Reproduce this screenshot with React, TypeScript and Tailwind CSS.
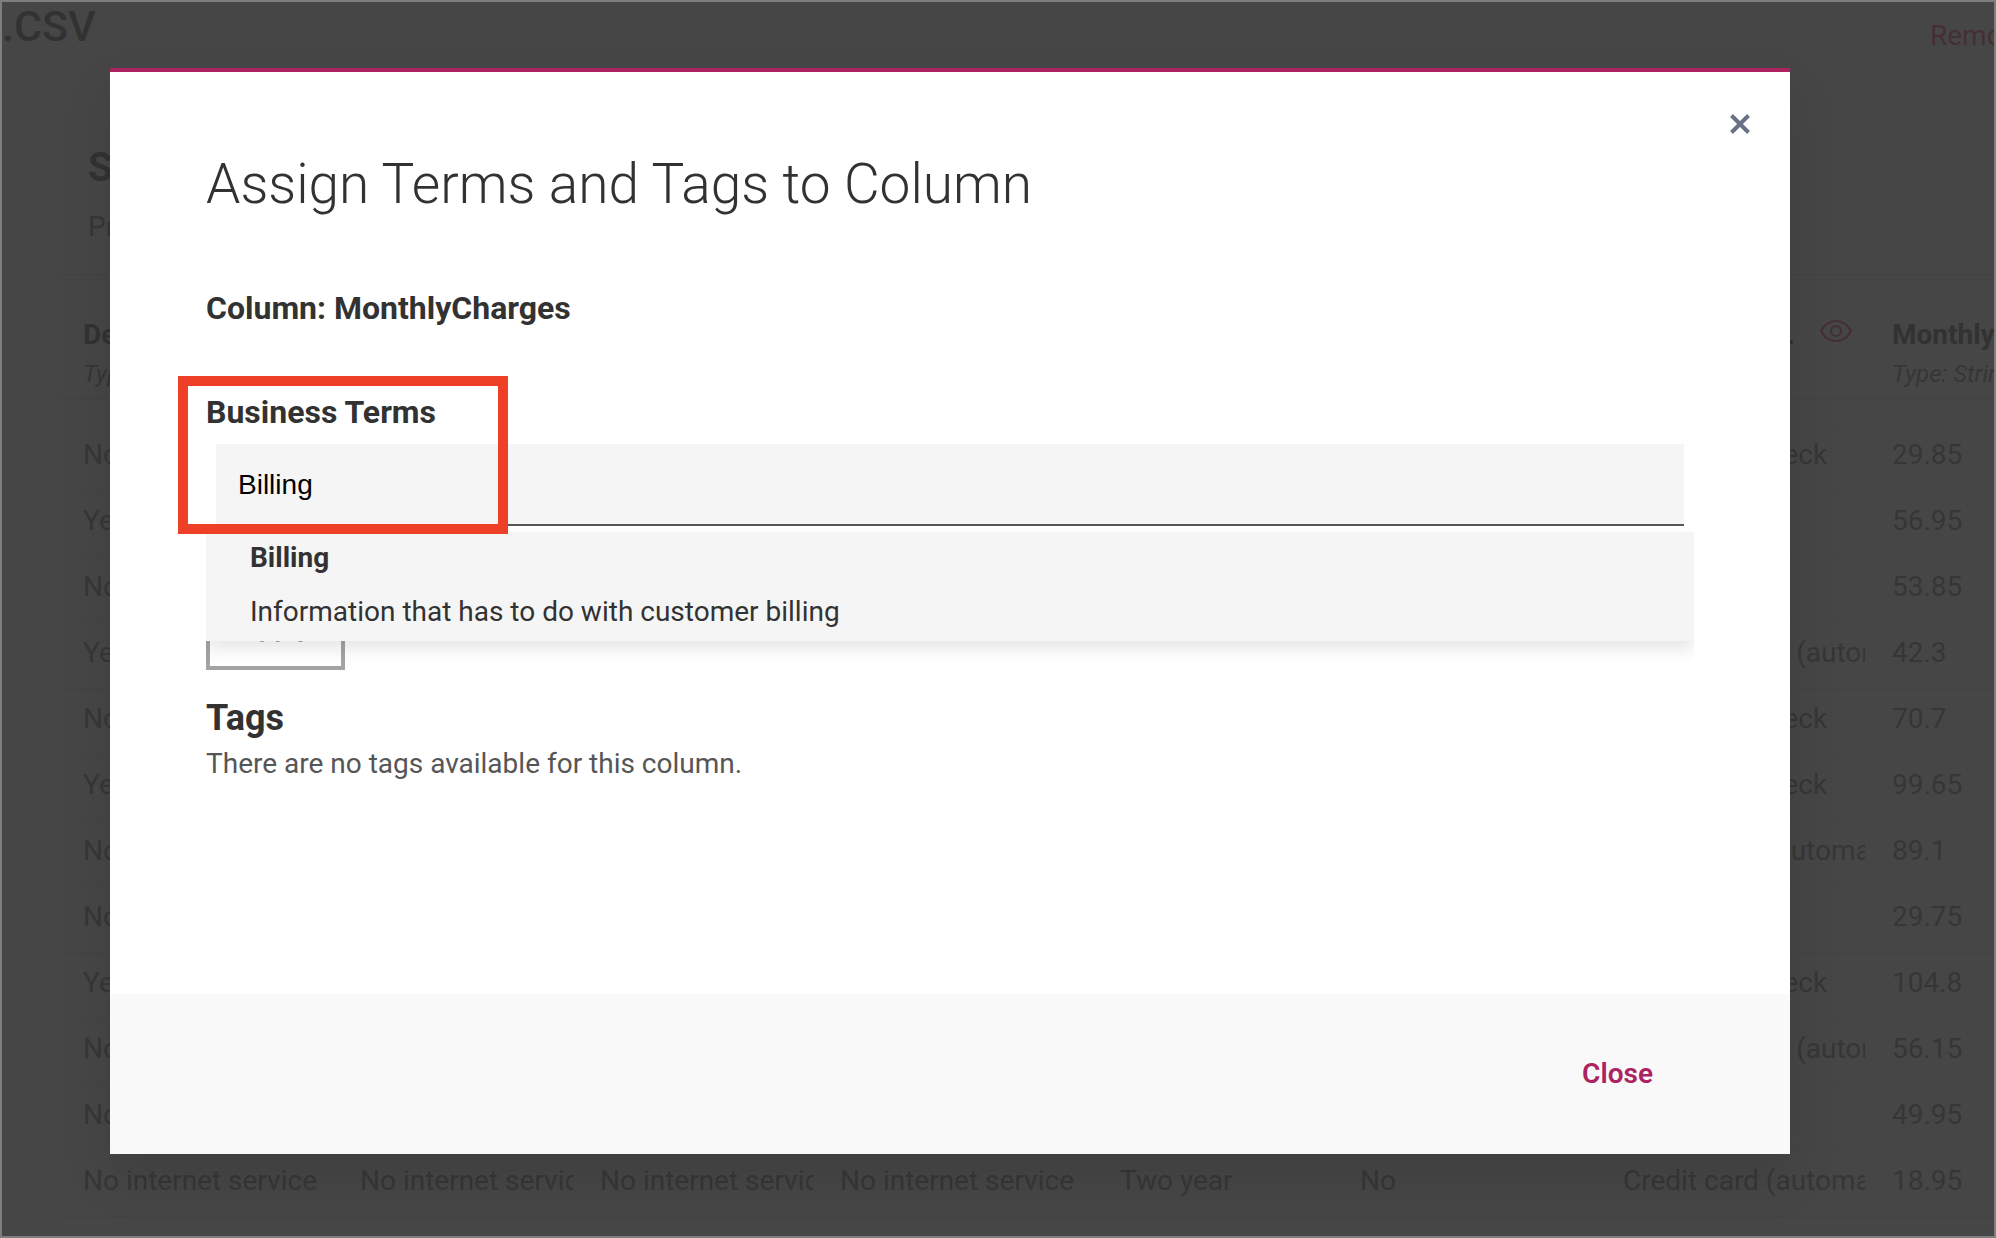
import { useState } from 'react';

const columns = [
  { name: 'DeviceProtection', width: 277 },
  { name: 'TechSupport', width: 240 },
  { name: 'StreamingTV', width: 240 },
  { name: 'StreamingMovies', width: 280 },
  { name: 'Contract', width: 240 },
  { name: 'PaperlessBilling', width: 263 },
  { name: 'PaymentMethod', width: 269 },
  { name: 'MonthlyCharges', width: 280 },
];

const none = 'No internet service';

const rows = [
  ['No', 'No', 'No', 'No', 'Month-to-month', 'Yes', 'Electronic check', '29.85'],
  ['Yes', 'No', 'No', 'No', 'One year', 'No', 'Mailed check', '56.95'],
  ['No', 'No', 'No', 'No', 'Month-to-month', 'Yes', 'Mailed check', '53.85'],
  ['Yes', 'Yes', 'No', 'No', 'One year', 'No', 'Bank transfer (automatic)', '42.3'],
  ['No', 'No', 'No', 'No', 'Month-to-month', 'Yes', 'Electronic check', '70.7'],
  ['Yes', 'No', 'Yes', 'Yes', 'Month-to-month', 'Yes', 'Electronic check', '99.65'],
  ['No', 'No', 'Yes', 'No', 'Month-to-month', 'Yes', 'Credit card (automatic)', '89.1'],
  ['No', 'No', 'No', 'No', 'Month-to-month', 'No', 'Mailed check', '29.75'],
  ['Yes', 'Yes', 'Yes', 'Yes', 'Month-to-month', 'Yes', 'Electronic check', '104.8'],
  ['No', 'No', 'No', 'No', 'One year', 'No', 'Bank transfer (automatic)', '56.15'],
  ['No', 'No', 'No', 'No', 'Month-to-month', 'Yes', 'Mailed check', '49.95'],
  [none, none, none, none, 'Two year', 'No', 'Credit card (automatic)', '18.95'],
];

function EyeIcon() {
  return (
    <svg width="32" height="24" viewBox="0 0 32 24" fill="none" stroke="#442f36" strokeWidth="2" aria-hidden="true">
      <path d="M1 12C4.500 5.200 9.800 2 16 2s11.500 3.200 15 10c-3.500 6.800-8.800 10-15 10S4.500 18.800 1 12z" strokeLinejoin="round" />
      <circle cx="16" cy="12" r="5" />
    </svg>
  );
}

function DataPage() {
  return (
    <div className="flex h-full flex-col overflow-hidden">
      <header className="flex h-[113px] shrink-0 justify-between">
        <h1 className="text-[43px] leading-[48px] font-medium text-[#323232]">.CSV</h1>
        <a href="#remove" className="mt-[14px] w-16 overflow-hidden text-[28px] leading-10 whitespace-nowrap text-[#442f36]">
          Remove
        </a>
      </header>
      <main className="ml-[57px] flex-1 border-t border-l border-[#444444]">
        <div className="h-[158px] pt-7 pl-7">
          <h2 className="text-[40px] leading-[48px] font-bold text-[#323232]">Schema</h2>
          <p className="mt-[15px] text-[28px] leading-10">Preview</p>
        </div>
        <div className="overflow-hidden">
          <table className="w-[2089px] table-fixed border-collapse text-left text-[28px] leading-10">
            <colgroup>
              {columns.map((c) => (
                <col key={c.name} style={{ width: c.width }} />
              ))}
            </colgroup>
            <thead>
              <tr className="border-y border-[#424242]">
                {columns.map((c) => (
                  <th key={c.name} scope="col" className="pt-10 pr-1 pb-2 pl-[23px] font-normal">
                    <div className="flex justify-between gap-5 pr-[13px]">
                      <span className="truncate font-bold text-[#323232]">{c.name}</span>
                      <button type="button" aria-label={`Preview ${c.name}`} className="flex h-8 shrink-0 items-center">
                        <EyeIcon />
                      </button>
                    </div>
                    <div className="mt-[3px] text-2xl leading-8 italic">Type: String</div>
                  </th>
                ))}
              </tr>
              <tr className="h-[26px] border-b border-[#444444]">
                <td colSpan={8} />
              </tr>
            </thead>
            <tbody>
              {rows.map((row, i) => (
                <tr key={i} className="border-b border-[#434343]">
                  {row.map((cell, j) => (
                    <td key={j} className="pt-[10px] pr-1 pb-[15px] pl-[23px]">
                      <div className="overflow-hidden whitespace-nowrap">{cell}</div>
                    </td>
                  ))}
                </tr>
              ))}
            </tbody>
          </table>
        </div>
      </main>
    </div>
  );
}

function BusinessTerms() {
  const [term, setTerm] = useState('Billing');
  return (
    <section className="relative mt-16">
      <label htmlFor="term" className="block text-[32px] leading-10 font-bold">
        Business Terms
      </label>
      <div className="relative mt-3">
        <div className="px-[10px]">
          <input
            id="term"
            type="text"
            value={term}
            onChange={(e) => setTerm(e.target.value)}
            className="block h-[82px] w-full border-b-2 border-[#565656] bg-[#f5f5f5] px-[22px] pt-[2px] font-['Liberation_Sans',sans-serif] text-[28px] text-black outline-none"
          />
        </div>
        <ul
          role="listbox"
          aria-label="Matching terms"
          className="absolute inset-x-0 top-full mt-[6px] bg-[#f5f5f5] shadow-[0_8px_16px_rgba(0,0,0,0.1)] [clip-path:inset(-16px_0_-32px_0)]"
        >
          <li role="option" aria-selected="false" className="px-11 pt-[6px] pb-[9px] text-[28px] leading-10">
            <div className="font-bold">Billing</div>
            <div className="mt-[14px]">Information that has to do with customer billing</div>
          </li>
        </ul>
      </div>
      <div aria-hidden="true" className="pointer-events-none absolute -top-4 -left-7 h-[158px] w-[330px] border-10 border-[#ee4027]" />
    </section>
  );
}

export default function App() {
  return (
    <div className="relative h-screen overflow-hidden border-2 border-[#7e7e7e] bg-[#464646] font-[Roboto,sans-serif] text-[#363636]">
      <DataPage />
      <div className="absolute inset-0 pt-[66px] pr-[204px] pl-[108px]">
        <div
          role="dialog"
          aria-modal="true"
          aria-labelledby="dialog-title"
          className="relative border-t-4 border-[#ad2260] bg-white text-[#323232] shadow-[0_24px_48px_rgba(0,0,0,0.1)]"
        >
          <button type="button" aria-label="Close dialog" className="absolute top-8 right-[30px] flex size-10 items-center justify-center">
            <svg width="20" height="20" viewBox="0 0 20 20" stroke="#6b7186" strokeWidth="4" aria-hidden="true">
              <path d="M1.500 1.500l17 17M18.500 1.500l-17 17" />
            </svg>
          </button>
          <div className="px-24 pt-20 pb-[210px]">
            <h2 id="dialog-title" className="text-[55px] leading-[64px] font-light">
              Assign Terms and Tags to Column
            </h2>
            <h3 className="mt-[72px] text-[32px] leading-10 font-bold">Column: MonthlyCharges</h3>
            <BusinessTerms />
            <button type="button" disabled className="mt-[58px] block h-[86px] w-[139px] border-4 border-[#a3a3a3] text-[28px] font-medium text-[#a3a3a3]">
              Apply
            </button>
            <h3 className="mt-6 text-4xl leading-[48px] font-bold">Tags</h3>
            <p className="mt-[2px] text-[28px] leading-10 text-[#565656]">There are no tags available for this column.</p>
          </div>
          <footer className="flex h-40 items-center justify-end bg-[#f9f9f9] pr-[137px]">
            <button type="button" className="text-[28px] leading-10 font-semibold text-[#ad2260]">
              Close
            </button>
          </footer>
        </div>
      </div>
    </div>
  );
}
